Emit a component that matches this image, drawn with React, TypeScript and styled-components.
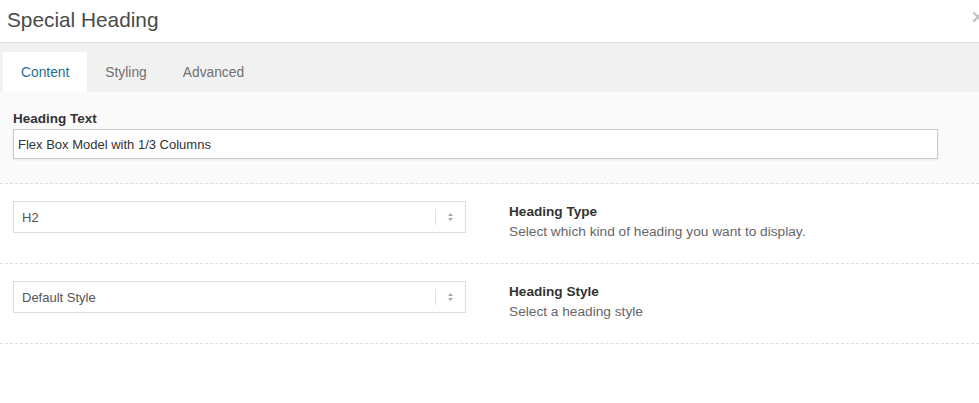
import React from "react";
import styled, { createGlobalStyle } from "styled-components";

const Global = createGlobalStyle`
  html, body { margin: 0; padding: 0; background: #fff; overflow: hidden; }
  body { font-family: "Liberation Sans", Arial, sans-serif; font-size: 13px; color: #333; }
  * { box-sizing: border-box; }
`;

const Page = styled.div`
  width: 979px;
  height: 403px;
  background: #fff;
  overflow: hidden;
`;

const Header = styled.div`
  height: 43px;
  border-bottom: 1px solid #dcdcdc;
  display: flex;
  align-items: center;
  justify-content: space-between;
  padding-left: 7px;
`;

const Title = styled.h1`
  margin: 0 0 2px;
  font-size: 20.8px;
  font-weight: 400;
  color: #4a4a4a;
`;

const Close = styled.span`
  display: flex;
  margin-right: -5px;
  margin-top: -8px;
`;

const TabBar = styled.div`
  background: #f1f1f1;
  height: 49px;
  display: flex;
  align-items: flex-end;
  padding-left: 3px;
`;

const Tab = styled.div<{ $active?: boolean }>`
  height: 40px;
  padding: 0 18px;
  display: flex;
  align-items: center;
  font-size: 13.8px;
  color: ${(p) => (p.$active ? "#1e6f93" : "#707070")};
  background: ${(p) => (p.$active ? "#fff" : "transparent")};
`;

const Section = styled.div<{ $shade?: boolean }>`
  background: ${(p) => (p.$shade ? "#fafafa" : "#fff")};
  border-bottom: 1px dashed #dedede;
`;

const TextSection = styled(Section)`
  padding: 19px 41px 24px 13px;
`;

const Label = styled.div`
  font-weight: 700;
  font-size: 13.5px;
  color: #333;
  line-height: 16px;
  margin-bottom: 2px;
`;

const TextInput = styled.div`
  height: 30px;
  border: 1px solid #c9c9c9;
  background: #fff;
  box-shadow: 0 1px 2px rgba(0, 0, 0, 0.08);
  display: flex;
  align-items: center;
  padding-left: 4px;
  font-size: 13px;
  color: #333;
`;

const FieldRow = styled(Section)`
  display: grid;
  grid-template-columns: 453px 1fr;
  column-gap: 43px;
  align-items: start;
  padding: 17px 13px 23px;
`;

const Select = styled.div`
  height: 32px;
  border: 1px solid #ddd;
  background: #fff;
  display: flex;
  align-items: center;
  padding-left: 8px;
  color: #555;
  font-size: 13px;
`;

const SelectValue = styled.span`
  flex: 1;
`;

const SelectDivider = styled.span`
  width: 1px;
  height: 16px;
  background: #e2e2e2;
`;

const Arrows = styled.span`
  width: 29px;
  display: flex;
  justify-content: center;
  align-items: center;
`;

const Info = styled.div`
  padding-top: 3px;
`;

const InfoTitle = styled.div`
  font-weight: 700;
  font-size: 13.6px;
  color: #333;
  line-height: 16px;
  margin-bottom: 4px;
`;

const InfoDesc = styled.div`
  color: #666;
  font-size: 13.7px;
  line-height: 16px;
`;

const ArrowIcon = () => (
  <svg width="7" height="10" viewBox="0 0 7 10">
    <path d="M3.5 1 L6 4 H1 Z" fill="#a8a8a8" />
    <path d="M3.5 9 L6 6 H1 Z" fill="#a8a8a8" />
  </svg>
);

const CloseIcon = () => (
  <svg width="12" height="12" viewBox="0 0 12 12">
    <path d="M2 2 L10 10 M10 2 L2 10" stroke="#c4c4c4" strokeWidth="2.4" strokeLinecap="round" />
  </svg>
);

const SelectField = ({ value }: { value: string }) => (
  <Select>
    <SelectValue>{value}</SelectValue>
    <SelectDivider />
    <Arrows>
      <ArrowIcon />
    </Arrows>
  </Select>
);

export default function App() {
  return (
    <Page>
      <Global />
      <Header>
        <Title>Special Heading</Title>
        <Close>
          <CloseIcon />
        </Close>
      </Header>
      <TabBar>
        <Tab $active>Content</Tab>
        <Tab>Styling</Tab>
        <Tab>Advanced</Tab>
      </TabBar>
      <TextSection $shade>
        <Label>Heading Text</Label>
        <TextInput>Flex Box Model with 1/3 Columns</TextInput>
      </TextSection>
      <FieldRow>
        <SelectField value="H2" />
        <Info>
          <InfoTitle>Heading Type</InfoTitle>
          <InfoDesc>Select which kind of heading you want to display.</InfoDesc>
        </Info>
      </FieldRow>
      <FieldRow>
        <SelectField value="Default Style" />
        <Info>
          <InfoTitle>Heading Style</InfoTitle>
          <InfoDesc>Select a heading style</InfoDesc>
        </Info>
      </FieldRow>
    </Page>
  );
}
